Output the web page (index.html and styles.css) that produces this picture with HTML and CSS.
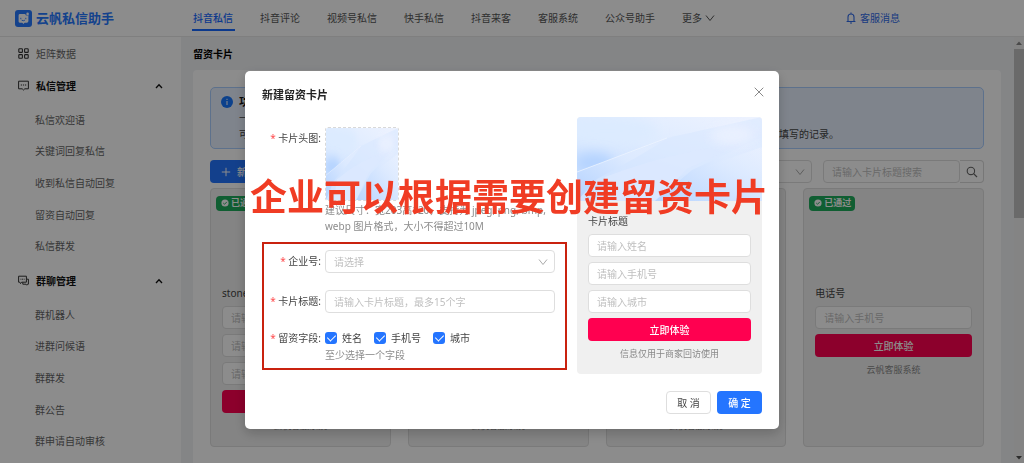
FILE: index.html
```
<!DOCTYPE html>
<html lang="zh-CN">
<head>
<meta charset="utf-8">
<meta name="viewport" content="width=device-width, initial-scale=1">
<title>云帆私信助手</title>
<link rel="stylesheet" href="styles.css">
</head>
<body>
<svg class="defs" aria-hidden="true">
  <defs>
    <linearGradient id="sky" x1="1" y1="0" x2="0.3" y2="1">
      <stop offset="0" stop-color="#eef3ff"/><stop offset="0.5" stop-color="#deebff"/><stop offset="1" stop-color="#c4dcff"/>
    </linearGradient>
    <linearGradient id="ray" x1="0" y1="1" x2="1" y2="0">
      <stop offset="0" stop-color="#b3d2ff"/><stop offset="0.6" stop-color="#dbe9ff"/><stop offset="1" stop-color="#eef3ff" stop-opacity="0"/>
    </linearGradient>
    <filter id="soft" x="-50%" y="-80%" width="200%" height="260%"><feGaussianBlur stdDeviation="6"/></filter>
    <symbol id="cover" viewBox="0 0 185 84" preserveAspectRatio="none">
      <rect width="185" height="84" fill="url(#sky)"/>
      <ellipse cx="30" cy="14" rx="50" ry="14" fill="#dcebff" filter="url(#soft)"/>
      <ellipse cx="17" cy="46" rx="20" ry="10" fill="#b4d3ff" filter="url(#soft)"/>
      <path d="M0 55 L90 21 L185 0 V30 L110 56 L60 84 H0Z" fill="#d9e8ff" opacity=".6"/>
      <path d="M0 55 L90 22 L60 40 L20 62 L0 84Z" fill="url(#ray)"/>
      <path d="M28 60 Q90 36 165 26 L110 52 L78 84 H20Z" fill="#dce9ff" opacity=".8"/>
      <path d="M78 84 L115 53 L185 20 V84Z" fill="url(#ray)" opacity=".75"/>
      <ellipse cx="155" cy="18" rx="22" ry="10" fill="#eff3ff" opacity=".7" filter="url(#soft)"/>
      <path d="M0 55 L90 21" stroke="#f0f6ff" stroke-width=".7"/>
    </symbol>
    <symbol id="down" viewBox="0 0 10 10"><path d="M1 2.5 5 7.5 9 2.5" fill="none" stroke="currentColor" stroke-width="1"/></symbol>
    <symbol id="up" viewBox="0 0 10 10"><path d="M2 7 5 3.8 8 7" fill="none" stroke="currentColor" stroke-width="1.3"/></symbol>
    <symbol id="pass" viewBox="0 0 10 10"><circle cx="5" cy="5" r="4.5" fill="currentColor"/><path d="M2.8 5 4.4 6.6 7.3 3.6" fill="none" stroke="#1eab5c" stroke-width="1.2"/></symbol>
  </defs>
</svg>

<header class="topbar">
  <a class="brand" href="#">
    <svg class="brand-logo" viewBox="0 0 17 17" aria-hidden="true">
      <rect width="17" height="17" rx="3" fill="#2678ff"/>
      <path d="M3.6 5.2Q3.6 4 5 4H10.2Q10.5 5.5 12 5.6 12.8 5.6 13.4 5V11Q13.4 12.8 11.8 12.8H9.6L8.4 14 7.3 12.8H5.2Q3.6 12.8 3.6 11.4Z" fill="#fff"/>
      <circle cx="12.6" cy="3.9" r="1.3" fill="#fff"/>
      <path d="M5.8 8.2V8.8M10.8 8.2V8.8M7 10.4Q8.4 11.3 9.6 10.4" fill="none" stroke="#2678ff" stroke-width=".9" stroke-linecap="round"/>
    </svg>
    <span>云帆私信助手</span>
  </a>
  <nav class="nav">
    <a class="nav-link is-active" href="#">抖音私信</a>
    <a class="nav-link" href="#">抖音评论</a>
    <a class="nav-link" href="#">视频号私信</a>
    <a class="nav-link" href="#">快手私信</a>
    <a class="nav-link" href="#">抖音来客</a>
    <a class="nav-link" href="#">客服系统</a>
    <a class="nav-link" href="#">公众号助手</a>
    <a class="nav-link" href="#">更多 <svg class="icon"><use href="#down"/></svg></a>
  </nav>
  <a class="service" href="#">
    <svg class="service-icon" viewBox="0 0 10 12" aria-hidden="true"><path d="M2 9.5V5a3 3 0 0 1 6 0v4.5M.6 9.5H9.4M5 .5V2M4 11H6" fill="none" stroke="currentColor" stroke-width="1.1"/></svg>
    <span>客服消息</span>
  </a>
</header>

<div class="shell">
  <aside class="sidebar">
    <a class="menu-link" href="#">
      <svg class="menu-icon" viewBox="0 0 11 11" aria-hidden="true"><g fill="none" stroke="currentColor" stroke-width="1.1"><rect x=".8" y=".8" width="3.6" height="3.6" rx=".7"/><rect x="6.6" y=".8" width="3.6" height="3.6" rx=".7"/><rect x=".8" y="6.6" width="3.6" height="3.6" rx=".7"/><rect x="6.6" y="6.6" width="3.6" height="3.6" rx=".7"/></g></svg>
      矩阵数据
    </a>
    <button class="menu-group" type="button">
      <svg class="menu-icon" viewBox="0 0 11 11" aria-hidden="true"><path d="M.6 1.2H10.4V8.8H6.8L5.5 10 4.2 8.8H.6Z" fill="none" stroke="currentColor"/><path d="M2.8 5H4M4.9 5H6.1M7 5H8.2" stroke="currentColor" stroke-width="1.2"/></svg>
      <span class="menu-name">私信管理</span>
      <svg class="icon"><use href="#up"/></svg>
    </button>
    <ul class="submenu">
      <li><a href="#">私信欢迎语</a></li>
      <li><a href="#">关键词回复私信</a></li>
      <li><a href="#">收到私信自动回复</a></li>
      <li><a href="#">留资自动回复</a></li>
      <li><a href="#">私信群发</a></li>
    </ul>
    <button class="menu-group" type="button">
      <svg class="menu-icon" viewBox="0 0 11 11" aria-hidden="true"><path d="M.6 1.2H8.4V7.2H3.6L2.5 8.6 1.8 7.2H.6ZM8.6 4.2H10.4V9.2H9.6L8.8 10.2 8 9.2H4.8V7.4" fill="none" stroke="currentColor"/><path d="M2.5 4.2H3.4M4.1 4.2H5M5.7 4.2H6.6" stroke="currentColor"/></svg>
      <span class="menu-name">群聊管理</span>
      <svg class="icon"><use href="#up"/></svg>
    </button>
    <ul class="submenu">
      <li><a href="#">群机器人</a></li>
      <li><a href="#">进群问候语</a></li>
      <li><a href="#">群群发</a></li>
      <li><a href="#">群公告</a></li>
      <li><a href="#">群申请自动审核</a></li>
    </ul>
  </aside>

  <main class="content">
    <h1 class="page-title">留资卡片</h1>
    <section class="panel">
      <div class="notice">
        <svg class="notice-icon" viewBox="0 0 12 12" aria-hidden="true"><circle cx="6" cy="6" r="6" fill="#1677ff"/><path d="M6 5V9M6 2.8V4" stroke="#fff" stroke-width="1"/></svg>
        <div>
          <h2 class="notice-title">功能说明</h2>
          <p>一键创建留资卡片，审核通过后即可在私信中使用。</p>
          <p>可在私信中向用户发送留资卡片，用户填写并提交信息后，系统会自动保存用户留下的姓名等资料，企业可在后台随时查看填写的记录。</p>
        </div>
      </div>
      <div class="toolbar">
        <button class="button button-primary button-new" type="button">
          <svg class="icon" viewBox="0 0 10 10" aria-hidden="true"><path d="M5 .8V9.2M.8 5H9.2" stroke="currentColor"/></svg>
          新建卡片
        </button>
        <div class="filters">
          <div class="select">
            <select class="field" aria-label="审核状态"><option>请选择</option></select>
            <svg class="icon select-arrow"><use href="#down"/></svg>
          </div>
          <div class="search">
            <input class="field search-input" type="text" placeholder="请输入卡片标题搜索" aria-label="卡片标题">
            <button class="search-button" type="button" aria-label="搜索">
              <svg class="search-icon" viewBox="0 0 12 12" aria-hidden="true"><circle cx="4.9" cy="4.9" r="3.7" fill="none" stroke="currentColor" stroke-width="1.1"/><path d="M7.6 7.6 11 11" stroke="currentColor" stroke-width="1.2"/></svg>
            </button>
          </div>
        </div>
      </div>
      <div class="cards">
        <article class="card">
          <div class="card-cover"><span class="badge"><svg class="badge-icon"><use href="#pass"/></svg>已通过</span></div>
          <div class="lead">
            <h3 class="lead-title">stone</h3>
            <input class="field" type="text" placeholder="请输入姓名" aria-label="姓名">
            <input class="field" type="text" placeholder="请输入手机号" aria-label="手机号">
            <input class="field" type="text" placeholder="请输入城市" aria-label="城市">
            <button class="button button-lead" type="button">立即体验</button>
            <p class="lead-note">云帆客服系统</p>
          </div>
        </article>
        <article class="card">
          <div class="card-cover"><span class="badge"><svg class="badge-icon"><use href="#pass"/></svg>已通过</span></div>
          <div class="lead">
            <h3 class="lead-title">卡片标题</h3>
            <input class="field" type="text" placeholder="请输入姓名" aria-label="姓名">
            <input class="field" type="text" placeholder="请输入手机号" aria-label="手机号">
            <input class="field" type="text" placeholder="请输入城市" aria-label="城市">
            <button class="button button-lead" type="button">立即体验</button>
            <p class="lead-note">云帆客服系统</p>
          </div>
        </article>
        <article class="card">
          <div class="card-cover"><span class="badge"><svg class="badge-icon"><use href="#pass"/></svg>已通过</span></div>
          <div class="lead">
            <h3 class="lead-title">卡片标题</h3>
            <input class="field" type="text" placeholder="请输入姓名" aria-label="姓名">
            <input class="field" type="text" placeholder="请输入手机号" aria-label="手机号">
            <input class="field" type="text" placeholder="请输入城市" aria-label="城市">
            <button class="button button-lead" type="button">立即体验</button>
            <p class="lead-note">云帆客服系统</p>
          </div>
        </article>
        <article class="card">
          <div class="card-cover"><span class="badge"><svg class="badge-icon"><use href="#pass"/></svg>已通过</span></div>
          <div class="lead">
            <h3 class="lead-title">电话号</h3>
            <input class="field" type="text" placeholder="请输入手机号" aria-label="手机号">
            <button class="button button-lead" type="button">立即体验</button>
            <p class="lead-note">云帆客服系统</p>
          </div>
        </article>
      </div>
    </section>
  </main>

  <div class="scrollbar" aria-hidden="true">
    <svg class="scroll-arrow" viewBox="0 0 10 12"><path d="M2 8 5 4.5 8 8Z" fill="#888"/></svg>
    <div class="scroll-track"><div class="scroll-thumb"></div></div>
    <svg class="scroll-arrow" viewBox="0 0 10 12"><path d="M2 5 5 8.5 8 5Z" fill="#505050"/></svg>
  </div>
</div>

<div class="overlay">
  <div class="modal" role="dialog" aria-modal="true" aria-labelledby="modal-title">
    <div class="modal-head">
      <h2 class="modal-title" id="modal-title">新建留资卡片</h2>
      <button class="close" type="button" aria-label="关闭">
        <svg class="icon" viewBox="0 0 10 10" aria-hidden="true"><path d="M.7.7 9.3 9.3M9.3.7.7 9.3" stroke="currentColor" stroke-width="1"/></svg>
      </button>
    </div>
    <div class="modal-body">
      <form class="form">
        <div class="row row-cover">
          <span class="label"><span class="star">*</span> 卡片头图:</span>
          <div>
            <button class="upload" type="button" aria-label="上传卡片头图"><svg class="upload-image"><use href="#cover"/></svg></button>
            <p class="hint">建议尺寸：宽203高120，支持为 jpeg, png, bmp, webp 图片格式，大小不得超过10M</p>
          </div>
        </div>
        <div class="marked">
          <div class="row">
            <label class="label" for="company"><span class="star">*</span> 企业号:</label>
            <div class="select">
              <select class="field" id="company"><option>请选择</option></select>
              <svg class="icon select-arrow"><use href="#down"/></svg>
            </div>
          </div>
          <div class="row">
            <label class="label" for="card-title"><span class="star">*</span> 卡片标题:</label>
            <input class="field" id="card-title" type="text" placeholder="请输入卡片标题，最多15个字">
          </div>
          <div class="row">
            <span class="label label-checks" id="fields-label"><span class="star">*</span> 留资字段:</span>
            <div>
              <div class="checks" role="group" aria-labelledby="fields-label">
                <label class="check"><input type="checkbox" checked>姓名</label>
                <label class="check"><input type="checkbox" checked>手机号</label>
                <label class="check"><input type="checkbox" checked>城市</label>
              </div>
              <p class="hint">至少选择一个字段</p>
            </div>
          </div>
        </div>
      </form>
      <div class="preview">
        <svg class="preview-cover" aria-hidden="true"><use href="#cover"/></svg>
        <div class="lead">
          <h3 class="lead-title">卡片标题</h3>
          <input class="field" type="text" placeholder="请输入姓名" aria-label="姓名">
          <input class="field" type="text" placeholder="请输入手机号" aria-label="手机号">
          <input class="field" type="text" placeholder="请输入城市" aria-label="城市">
          <button class="button button-lead" type="button">立即体验</button>
          <p class="lead-note">信息仅用于商家回访使用</p>
        </div>
      </div>
    </div>
    <div class="modal-foot">
      <button class="button button-plain" type="button">取 消</button>
      <button class="button button-primary" type="button">确 定</button>
    </div>
    <p class="caption">企业可以根据需要创建留资卡片</p>
  </div>
</div>
</body>
</html>
```

FILE: styles.css
```
* { box-sizing: border-box; }

body {
  margin: 0;
  height: 100vh;
  display: flex;
  flex-direction: column;
  overflow: hidden;
  background: #f0f2f5;
  color: #444;
  font: 10px/16px "Noto Sans", "Noto Sans CJK SC", sans-serif;
}

h1, h2, h3, p, ul { margin: 0; padding: 0; }
ul { list-style: none; }
a { color: inherit; text-decoration: none; }
button, input, select { font: inherit; color: inherit; margin: 0; }
button { padding: 0; border: 0; background: none; }
svg { display: block; flex: none; }

.defs { position: absolute; width: 0; height: 0; }
.icon { width: 10px; height: 10px; }

/* Top bar */
.topbar {
  flex: none;
  display: flex;
  align-items: center;
  height: 37px;
  padding: 0 124px 0 15px;
  background: #fff;
  border-bottom: 1px solid #e8e8e8;
}
.brand {
  display: flex;
  align-items: center;
  gap: 4px;
  width: 177px;
  color: #2678ff;
  font-size: 13px;
  font-weight: 700;
}
.brand-logo { width: 17px; height: 17px; }
.nav { display: flex; gap: 24px; flex: 1; margin-top: 2px; white-space: nowrap; }
.nav-link {
  display: flex;
  align-items: center;
  gap: 3px;
  padding: 3px 2px 3px 1px;
  border-bottom: 2px solid transparent;
  color: #555;
}
.is-active { color: #1668ff; border-color: #1668ff; font-weight: 500; }
.service { display: flex; align-items: center; gap: 4px; color: #2f6bea; }
.service-icon { width: 10px; height: 12px; }

/* Side menu */
.shell { flex: 1; display: flex; min-height: 0; }
.sidebar { flex: none; width: 181px; padding-top: 3px; background: #fff; }
.menu-link, .menu-group {
  display: flex;
  align-items: center;
  gap: 7px;
  width: 100%;
  padding: 0 17px 0 18px;
}
.menu-link { height: 27px; color: #666; }
.menu-group { height: 37px; font-weight: 700; color: #111; }
.menu-name { flex: 1; text-align: left; }
.menu-icon { width: 11px; height: 11px; color: #333; }
.submenu { display: grid; grid-auto-rows: 1fr; align-items: center; height: 158px; padding-left: 35px; color: #666; }

/* Content */
.content { flex: 1; min-width: 0; padding: 9px 13px 0 12px; overflow: hidden; }
.page-title { font-size: 10px; font-weight: 700; color: #000; margin-bottom: 8px; }
.panel { padding: 17px 17px 32px; background: #fff; border-radius: 4px; }
.notice {
  display: flex;
  gap: 6px;
  padding: 6px 10px;
  border: 1px solid #a9ceff;
  border-radius: 5px;
  background: #e8f1ff;
  white-space: nowrap;
}
.notice-icon { width: 12px; height: 12px; margin-top: 2px; }
.notice-title { font-size: 11px; font-weight: 700; color: #111; }
.toolbar { display: flex; justify-content: space-between; margin: 11px 0 5px; }
.filters { display: flex; gap: 11px; }
.filters .select { width: 140px; }
.search { display: flex; width: 161px; }
.search-input { border-radius: 4px 0 0 4px; }
.search-button {
  flex: none;
  display: grid;
  place-items: center;
  width: 24px;
  border: 1px solid #d9d9d9;
  border-left: 0;
  border-radius: 0 4px 4px 0;
  color: #666;
}
.search-icon { width: 12px; height: 12px; }

/* Controls */
.field {
  display: block;
  width: 100%;
  min-width: 0;
  height: 23px;
  padding: 0 8px;
  border: 1px solid #dedede;
  border-radius: 4px;
  background: #fff;
  appearance: none;
  outline: 0;
}
.field::placeholder { color: #bfbfbf; opacity: 1; }
.select { position: relative; }
.select .field { color: #bfbfbf; }
.select-arrow { position: absolute; right: 7px; top: 7px; color: #aaa; pointer-events: none; }
.button {
  display: flex;
  align-items: center;
  justify-content: center;
  height: 23px;
  border-radius: 4px;
}
.button-primary { color: #fff; background: #2475ff; font-weight: 500; }
.button-plain { border: 1px solid #dedede; background: #fff; }
.button-new { gap: 6px; padding: 0 11px; }
.button-lead { width: 100%; color: #fff; background: #ff0050; font-weight: 500; }

/* Lead cards */
.cards { display: grid; grid-template-columns: repeat(4, 1fr); gap: 17px; }
.card { border: 1px solid #dedede; border-radius: 4px; background: #f0f0f0; }
.card-cover { height: 84px; padding: 6px 5px; }
.badge {
  display: inline-flex;
  align-items: center;
  gap: 2px;
  height: 15px;
  padding: 0 4px 0 5px;
  border-radius: 4px;
  background: #1eab5c;
  color: #fff;
  font-size: 9px;
  font-weight: 700;
}
.badge-icon { width: 8px; height: 8px; }
.lead { display: grid; gap: 5px; padding: 12px 11px; }
.lead-title { font-size: 10px; font-weight: 400; }
.lead-note { font-size: 9px; text-align: center; color: #888; }

/* Scrollbar */
.scrollbar { flex: none; display: flex; flex-direction: column; width: 10px; background: #f1f1f1; }
.scroll-arrow { width: 10px; height: 12px; }
.scroll-track { flex: 1; }
.scroll-thumb { height: 42%; background: #c1c1c1; }

/* Dialog */
.overlay {
  position: fixed;
  inset: 0;
  display: flex;
  justify-content: center;
  align-items: flex-start;
  padding-top: 71px;
  background: rgba(0, 0, 0, .45);
}
.modal {
  position: relative;
  width: 100%;
  max-width: 534px;
  padding: 16px 17px 15px;
  border-radius: 5px;
  background: #fff;
  box-shadow: 0 4px 12px rgba(0, 0, 0, .2);
}
.modal-head { display: flex; justify-content: space-between; align-items: flex-start; margin-bottom: 14px; }
.modal-title { font-size: 11px; font-weight: 700; color: #222; }
.close { width: 10px; height: 10px; margin-right: -2px; color: #888; }
.modal-body { display: grid; grid-template-columns: 1fr 185px; gap: 10px; }
.form { padding-top: 10px; }
.row { display: grid; grid-template-columns: 57px 1fr; gap: 4px; }
.row-cover { padding: 0 12px 0 2px; margin-bottom: 8px; }
.label { line-height: 23px; text-align: right; white-space: nowrap; }
.label-checks { line-height: 16px; }
.star { color: #ff4d4f; }
.upload {
  display: block;
  width: 74px;
  height: 74px;
  border: 1px dashed #d9d9d9;
  border-radius: 3px;
  overflow: hidden;
}
.upload-image { width: 100%; height: 100%; }
.hint { margin-top: 1px; color: #8c8c8c; }
.marked {
  display: grid;
  gap: 17px;
  padding: 6px 10px 5px 0;
  border: 2px solid #c9220f;
}
.checks { display: flex; gap: 12px; }
.check { display: flex; align-items: center; gap: 5px; }
.check input {
  display: grid;
  place-items: center;
  width: 12px;
  height: 12px;
  border-radius: 3px;
  background: #2475ff;
  appearance: none;
}
.check input:checked::before {
  content: "";
  width: 4px;
  height: 7px;
  margin-bottom: 2px;
  border: solid #fff;
  border-width: 0 1px 1px 0;
  transform: rotate(45deg);
}
.preview { border-radius: 4px; background: #f0f0f0; overflow: hidden; align-self: start; }
.preview-cover { width: 100%; height: 84px; }
.modal-foot { display: flex; justify-content: flex-end; gap: 6px; margin-top: 17px; }
.modal-foot .button { width: 45px; }
.caption {
  position: absolute;
  left: 5px;
  top: 106px;
  color: #f03c24;
  font-size: 37px;
  font-weight: 700;
  line-height: 40px;
  white-space: nowrap;
}
```
